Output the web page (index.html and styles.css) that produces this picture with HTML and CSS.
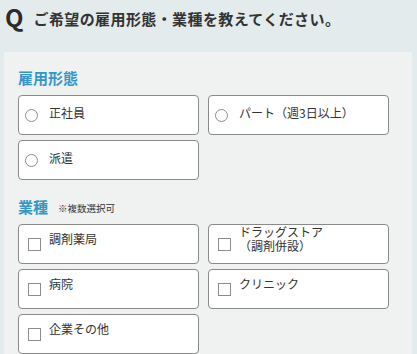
FILE: index.html
```html
<!DOCTYPE html>
<html lang="ja">
<head>
    <meta charset="UTF-8">
    <meta name="viewport" content="width=device-width, initial-scale=1.0">
    <title>ご希望の雇用形態・業種</title>
    <link rel="stylesheet" href="styles.css">
</head>
<body>
    <div class="question">
        <span class="q-mark">Q</span>
        <h1 class="q-title">ご希望の雇用形態・業種を教えてください。</h1>
    </div>

    <div class="panel">
        <h2 class="group-title">雇用形態</h2>
        <div class="options">
            <label class="option radio">
                <input type="radio" name="employment" value="seishain">
                <span class="mark"></span>
                <span class="text">正社員</span>
            </label>
            <label class="option radio">
                <input type="radio" name="employment" value="part">
                <span class="mark"></span>
                <span class="text">パート（週3日以上）</span>
            </label>
            <label class="option radio">
                <input type="radio" name="employment" value="haken">
                <span class="mark"></span>
                <span class="text">派遣</span>
            </label>
        </div>

        <h2 class="group-title second">業種<small>※複数選択可</small></h2>
        <div class="options">
            <label class="option check">
                <input type="checkbox" name="industry" value="pharmacy">
                <span class="mark"></span>
                <span class="text">調剤薬局</span>
            </label>
            <label class="option check">
                <input type="checkbox" name="industry" value="drugstore">
                <span class="mark"></span>
                <span class="text">ドラッグストア<br>（調剤併設）</span>
            </label>
            <label class="option check">
                <input type="checkbox" name="industry" value="hospital">
                <span class="mark"></span>
                <span class="text">病院</span>
            </label>
            <label class="option check">
                <input type="checkbox" name="industry" value="clinic">
                <span class="mark"></span>
                <span class="text">クリニック</span>
            </label>
            <label class="option check">
                <input type="checkbox" name="industry" value="company">
                <span class="mark"></span>
                <span class="text">企業その他</span>
            </label>
        </div>
    </div>
</body>
</html>
```

FILE: styles.css
```css
body {
    margin: 0;
    background-color: #e3ebed;
    font-family: "Noto Sans CJK JP", "Noto Sans", sans-serif;
    color: #333;
}
.question {
    display: flex;
    align-items: center;
    height: 34px;
    padding: 0 5px;
    margin-bottom: 18px;
}
.q-mark {
    font-size: 24px;
    font-weight: bold;
    line-height: 1;
    color: #2b2b2b;
    margin-right: 10px;
}
.q-title {
    margin: 4px 0 0 0;
    font-size: 15px;
    font-weight: bold;
    letter-spacing: 0.4px;
    line-height: 20px;
}
.panel {
    margin: 0 5px 0 4px;
    padding: 16px 14px 20px 14px;
    background-color: #f0f1f1;
    border-radius: 2px;
}
.group-title {
    display: flex;
    align-items: center;
    height: 20px;
    margin: 0 0 7px 0;
    font-size: 15px;
    font-weight: bold;
    line-height: 20px;
    color: #3597c8;
}
.group-title.second {
    margin-top: 17px;
}
.group-title small {
    margin: 3px 0 0 10px;
    font-size: 9.5px;
    font-weight: normal;
    line-height: 1;
    color: #333;
}
.options {
    display: grid;
    grid-template-columns: 181px 181px;
    gap: 5px 9px;
}
.option {
    display: flex;
    align-items: center;
    height: 40px;
    box-sizing: border-box;
    background: #fff;
    border: 1px solid #8a8a8a;
    border-radius: 4px;
    cursor: pointer;
}
.option input {
    display: none;
}
.option .text {
    font-size: 12px;
    line-height: 14px;
}
.radio {
    padding-left: 6px;
}
.radio .mark {
    width: 13px;
    height: 13px;
    box-sizing: border-box;
    border: 1px solid #8c8c8c;
    border-radius: 50%;
    margin-right: 11px;
}
.radio .text {
    margin-bottom: 4px;
}
.check {
    padding-left: 9px;
}
.check .mark {
    width: 13px;
    height: 13px;
    box-sizing: border-box;
    border: 1px solid #8c8c8c;
    margin-right: 8px;
}
.check .text {
    margin-bottom: 10px;
}
```
